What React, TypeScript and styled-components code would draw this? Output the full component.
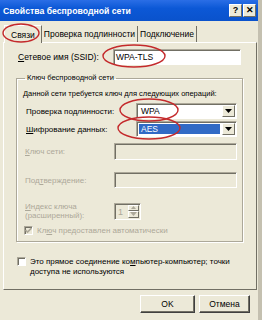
import * as React from "react";
import styled, { createGlobalStyle } from "styled-components";

const Global = createGlobalStyle`
  html, body { margin: 0; padding: 0; background: #ece9d8; }
  * { box-sizing: border-box; }
`;

const face = "#ece9d8";
const shadow = "#aca899";
const dark = "#716f64";
const disabled = "#aca899";

const Window = styled.div`
  position: relative;
  width: 262px;
  height: 320px;
  overflow: hidden;
  background: ${face};
  font-family: "Liberation Sans", Arial, sans-serif;
  font-size: 8px;
  color: #000;
  border-right: 4px solid #c4c0b0;
`;

const TitleBar = styled.div`
  display: flex;
  align-items: center;
  height: 21px;
  padding: 0 2px 0 3px;
  background: linear-gradient(#2a6ee6, #0c58d6 40%, #0a52cc);
  color: #fff;
  font-weight: bold;
  font-size: 8.7px;
`;

const Title = styled.span`
  flex: 1;
`;

const CapButton = styled.div`
  width: 13px;
  height: 13px;
  margin-left: 1px;
  background: ${face};
  border: 1px solid;
  border-color: #fff ${dark} ${dark} #fff;
  display: flex;
  align-items: center;
  justify-content: center;
  color: #000;
  font-size: 9px;
  font-weight: bold;
  line-height: 1;
`;

const Tabs = styled.div`
  display: flex;
  align-items: flex-end;
  height: 21px;
  padding: 3px 0 0 4px;
`;

const Tab = styled.div<{ $active?: boolean }>`
  height: ${(p) => (p.$active ? 18 : 16)}px;
  display: flex;
  align-items: center;
  padding: 0 ${(p) => (p.$active ? 6 : 2)}px;
  border-right: 1px solid ${dark};
  border-left: ${(p) => (p.$active ? "1px solid #fff" : "none")};
  border-top: ${(p) => (p.$active ? "1px solid #fff" : "none")};
  margin-bottom: ${(p) => (p.$active ? -1 : 0)}px;
  background: ${face};
  font-size: 8.5px;
  position: relative;
`;

const Panel = styled.div`
  height: 248px;
  margin: 0 1px 0 3px;
  border: 1px solid;
  border-color: #fff ${dark} ${dark} #fff;
  padding: 6px 0 0 13px;
`;

const Row = styled.div<{ $mt?: number; $ml?: number }>`
  display: flex;
  align-items: center;
  margin-top: ${(p) => p.$mt ?? 0}px;
  margin-left: ${(p) => p.$ml ?? 0}px;
`;

const Label = styled.div<{ $w: number; $off?: boolean; $ml?: number }>`
  width: ${(p) => p.$w}px;
  flex: none;
  margin-left: ${(p) => p.$ml ?? 0}px;
  color: ${(p) => (p.$off ? disabled : "#000")};
  line-height: 9px;
`;

const Field = styled.div<{ $w: number; $h?: number; $off?: boolean }>`
  width: ${(p) => p.$w}px;
  height: ${(p) => p.$h ?? 16}px;
  display: flex;
  align-items: center;
  padding-left: 2px;
  background: ${(p) => (p.$off ? face : "#fff")};
  border: 1px solid;
  border-color: ${shadow} #fff #fff ${shadow};
  box-shadow: inset 1px 1px 0 ${dark};
  font-size: 8.5px;
`;

const Value = styled.span<{ $sel?: boolean }>`
  flex: 1;
  align-self: stretch;
  display: flex;
  align-items: center;
  margin: 2px 1px 2px 0;
  padding-left: 2px;
  background: ${(p) => (p.$sel ? "#316ac5" : "transparent")};
  color: ${(p) => (p.$sel ? "#fff" : "#000")};
`;

const Arrow = styled.div`
  width: 13px;
  align-self: stretch;
  margin: 1px;
  background: ${face};
  border: 1px solid;
  border-color: #fff ${dark} ${dark} #fff;
  display: flex;
  align-items: center;
  justify-content: center;
`;

const Group = styled.fieldset`
  width: 227px;
  height: 169px;
  margin: 8px 0 0 -1px;
  padding: 0 0 0 6px;
  border: 1px solid ${shadow};
  box-shadow: 1px 1px 0 #fff, inset 1px 1px 0 #fff;
  legend {
    padding: 0 2px;
    margin-left: 2px;
    font-size: 7.5px;
    line-height: 10px;
  }
`;

const Text = styled.div<{ $mt?: number; $off?: boolean; $size?: number }>`
  margin-top: ${(p) => p.$mt ?? 0}px;
  font-size: ${(p) => p.$size ?? 8}px;
  line-height: 10px;
  white-space: nowrap;
  color: ${(p) => (p.$off ? disabled : "#000")};
`;

const Check = styled.div<{ $off?: boolean }>`
  width: 9px;
  height: 9px;
  flex: none;
  background: ${(p) => (p.$off ? face : "#fff")};
  border: 1px solid;
  border-color: ${shadow} #fff #fff ${shadow};
  box-shadow: inset 1px 1px 0 ${dark};
  display: flex;
  align-items: center;
  justify-content: center;
`;

const CheckRow = styled.div<{ $mt?: number; $ml?: number }>`
  display: flex;
  align-items: flex-start;
  gap: 4px;
  margin-top: ${(p) => p.$mt ?? 0}px;
  margin-left: ${(p) => p.$ml ?? 0}px;
`;

const Spin = styled.div`
  display: flex;
  width: 27px;
  height: 17px;
  border: 1px solid;
  border-color: ${shadow} #fff #fff ${shadow};
  box-shadow: inset 1px 1px 0 ${dark};
  color: ${disabled};
  font-size: 9px;
`;

const SpinVal = styled.div`
  flex: 1;
  padding: 3px 0 0 3px;
`;

const SpinBtns = styled.div`
  width: 11px;
  display: flex;
  flex-direction: column;
  margin: 1px;
  div {
    flex: 1;
    border: 1px solid;
    border-color: #fff ${dark} ${dark} #fff;
    display: flex;
    align-items: center;
    justify-content: center;
  }
`;

const Footer = styled.div`
  display: flex;
  justify-content: flex-end;
  gap: 4px;
  padding: 5px 8px 0 0;
`;

const Button = styled.div<{ $w: number }>`
  width: ${(p) => p.$w}px;
  height: 18px;
  display: flex;
  align-items: center;
  justify-content: center;
  background: ${face};
  border: 1px solid;
  border-color: #fff #404040 #404040 #fff;
  box-shadow: inset -1px -1px 0 ${dark};
  font-size: 8.5px;
`;

const Marks = styled.svg`
  position: absolute;
  left: 0;
  top: 0;
  pointer-events: none;
`;

const Tri = ({ color = "#000" }: { color?: string }) => (
  <svg width="7" height="4" viewBox="0 0 7 4">
    <path d="M0 0h7L3.5 4z" fill={color} />
  </svg>
);

export default function App() {
  return (
    <Window>
      <Global />
      <TitleBar>
        <Title>Свойства беспроводной сети</Title>
        <CapButton>?</CapButton>
        <CapButton>✕</CapButton>
      </TitleBar>
      <Tabs>
        <Tab $active>Связи</Tab>
        <Tab>Проверка подлинности</Tab>
        <Tab>Подключение</Tab>
      </Tabs>
      <Panel>
        <Row>
          <Label $w={95} $ml={1} style={{ fontSize: 8.5 }}>
            <u>С</u>етевое имя (SSID):
          </Label>
          <Field $w={128}>WPA-TLS</Field>
        </Row>
        <Group>
          <legend>Ключ беспроводной сети</legend>
          <Text $mt={6} $size={7.5}>
            Данной сети требуется ключ для следующих операций:
          </Text>
          <Row $mt={4} $ml={3}>
            <Label $w={110}>Проверка подлинности:</Label>
            <Field $w={101}>
              <Value>WPA</Value>
              <Arrow>
                <Tri />
              </Arrow>
            </Field>
          </Row>
          <Row $mt={2} $ml={3}>
            <Label $w={110}>
              <u>Ш</u>ифрование данных:
            </Label>
            <Field $w={101}>
              <Value $sel>AES</Value>
              <Arrow>
                <Tri />
              </Arrow>
            </Field>
          </Row>
          <Row $mt={6} $ml={2}>
            <Label $w={89} $off>
              <u>К</u>люч сети:
            </Label>
            <Field $w={123} $h={17} $off />
          </Row>
          <Row $mt={12} $ml={2}>
            <Label $w={89} $off>
              Под<u>т</u>верждение:
            </Label>
            <Field $w={123} $h={16} $off />
          </Row>
          <Row $mt={14} $ml={2}>
            <Label $w={89} $off>
              <u>И</u>ндекс ключа
              <br />
              (расширенный):
            </Label>
            <Spin>
              <SpinVal>1</SpinVal>
              <SpinBtns>
                <div>
                  <svg width="5" height="3" viewBox="0 0 5 3">
                    <path d="M0 3h5L2.5 0z" fill={disabled} />
                  </svg>
                </div>
                <div>
                  <Tri color={disabled} />
                </div>
              </SpinBtns>
            </Spin>
          </Row>
          <CheckRow $mt={6} $ml={1}>
            <Check $off>
              <svg width="7" height="7" viewBox="0 0 7 7">
                <path d="M0.5 3l2 2 4-4" stroke={disabled} strokeWidth="1.6" fill="none" />
              </svg>
            </Check>
            <Text $off>
              Кл<u>ю</u>ч предоставлен автоматически
            </Text>
          </CheckRow>
        </Group>
        <CheckRow $mt={15}>
          <Check />
          <Text>
            Это прямое соединение ко<u>м</u>пьютер-компьютер; точки
            <br />
            доступа не используются
          </Text>
        </CheckRow>
      </Panel>
      <Footer>
        <Button $w={55}>OK</Button>
        <Button $w={51}>Отмена</Button>
      </Footer>
      <Marks width="262" height="320">
        <g fill="none" stroke="#c42a2c" strokeWidth="1.4">
          <ellipse cx="21" cy="33" rx="18" ry="9" />
          <ellipse cx="134" cy="56" rx="31" ry="11" />
          <ellipse cx="149" cy="110" rx="29" ry="11" />
          <ellipse cx="149" cy="128" rx="31" ry="11" />
        </g>
      </Marks>
    </Window>
  );
}
